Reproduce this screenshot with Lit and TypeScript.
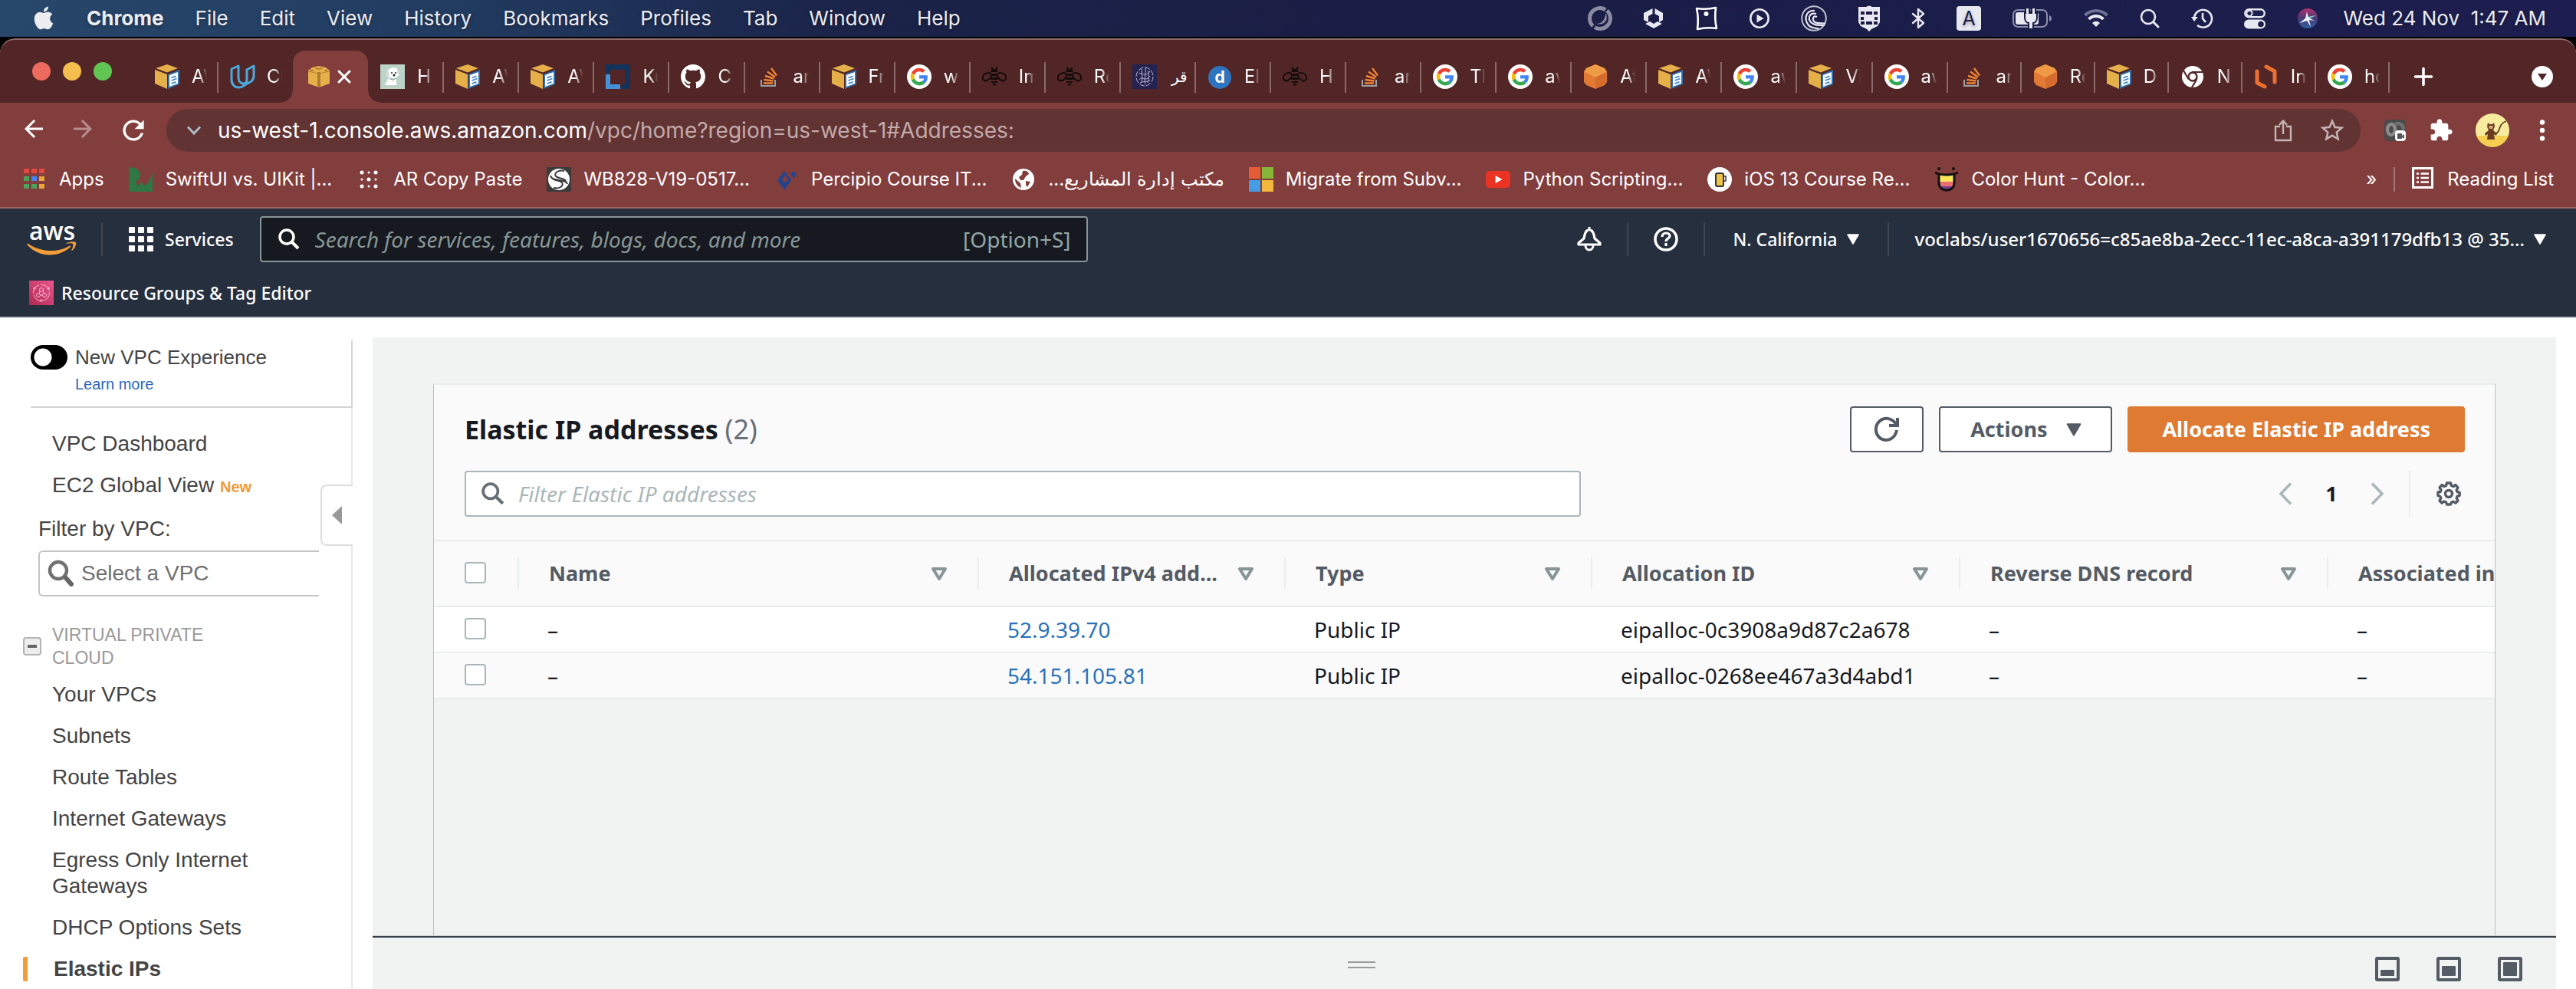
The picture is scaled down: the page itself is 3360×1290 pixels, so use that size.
import { LitElement, html, css, svg, type TemplateResult } from "lit";
import { customElement } from "lit/decorators.js";
import { classMap } from "lit/directives/class-map.js";

const art = (w: number, h: number, box: string, body: TemplateResult) =>
  html`<svg class="art" width=${w} height=${h} viewBox=${box} fill="none" aria-hidden="true">${body}</svg>`;

const googleG = svg`
  <circle cx="24" cy="24" r="24" fill="#fff"/>
  <g transform="translate(7 7) scale(.71)">
    <path fill="#EA4335" d="M24 9.5c3.54 0 6.71 1.22 9.21 3.6l6.85-6.85C35.9 2.38 30.47 0 24 0 14.62 0 6.51 5.38 2.56 13.22l7.98 6.19C12.43 13.72 17.74 9.5 24 9.5z"/>
    <path fill="#4285F4" d="M46.98 24.55c0-1.57-.15-3.09-.38-4.55H24v9.02h12.94c-.58 2.96-2.26 5.48-4.78 7.18l7.73 6c4.51-4.18 7.09-10.36 7.09-17.65z"/>
    <path fill="#FBBC05" d="M10.53 28.59c-.48-1.45-.76-2.99-.76-4.59s.27-3.14.76-4.59l-7.98-6.19C.92 16.46 0 20.12 0 24c0 3.88.92 7.54 2.56 10.78l7.97-6.19z"/>
    <path fill="#34A853" d="M24 48c6.48 0 11.93-2.13 15.89-5.81l-7.73-6c-2.15 1.45-4.92 2.3-8.16 2.3-6.26 0-11.57-4.22-13.47-9.91l-7.98 6.19C6.51 42.62 14.62 48 24 48z"/>
  </g>`;

const favicons: Record<string, TemplateResult> = {
  docs: art(32, 32, "0 0 32 32", svg`
    <path fill="#e5b04a" d="M16 0 30 5 16 10.500 1 5z"/>
    <path fill="#e5b04a" d="M0 7l16 6v19L0 25z"/>
    <path fill="#2f6fad" d="M17 13 32 7v19l-15 6z"/>
    <path fill="#fff" d="M19 14l11-4v15l-11 4z"/>
    <path stroke="#3d83c4" stroke-width="1.800" d="M21.500 17.500l6-2.200M21.500 21l7-2.500M21.500 25l6-2.200"/>`),
  udacity: art(32, 32, "0 0 32 32", svg`
    <path stroke="#4aa9dc" stroke-width="3" stroke-linejoin="round" d="M11 2 2 6v14c0 6 4 10 9 10 4 0 6-1 8-3l9-5c2-2 3-4 3-7V2l-9 5v11c0 4-1 7-4 7-5 0-7-4-7-8zM19 27c1-1 3-3 3-7"/>`),
  box: art(28, 28, "0 0 28 28", svg`
    <path fill="#e5b04a" d="M0 6l5-4 9-2 9 2 5 4v17l-14 5-14-5z"/>
    <path fill="#9c6a2b" d="M3 4l5 2-5 2zM25 4l-5 2 5 2zM9 2l5 1 5-1-1 2-4 1-4-1z" opacity=".7"/>
    <path fill="#b07a2e" d="M12 8h4v20h-4z"/><path stroke="#b98233" d="M0 7l14 3 14-3"/>`),
  dog: art(32, 32, "0 0 32 32", svg`
    <path fill="#bcd3c8" d="M0 0h32v32H0z"/>
    <path fill="#fff" d="M12 6c5-3 10-2 12 2 2 3 1 6-1 7l-2 3v9H9c-3 0-4-2-2-3l2-1c0-3 1-5 3-7-4 0-4-8 0-10z"/>
    <path fill="#d9d9d9" d="M10 7c-3 2-3 6-2 9 2 1 4-1 4-4zM22 6c3 1 4 4 3 7l-3-1z"/>
    <circle cx="15" cy="11" r="1" fill="#222"/><circle cx="20" cy="11" r="1" fill="#222"/><circle cx="18" cy="14" r="1.500" fill="#222"/>
    <path stroke="#6aa9d6" stroke-width="1.500" d="M12 18c3 2 6 2 9 0"/><circle cx="17" cy="20" r="1.400" fill="#e6b84c"/>`),
  kube: art(32, 32, "0 0 32 32", svg`
    <path fill="#14335c" d="M0 0h32v32H20v-6h5V7H6v5H0z"/><path fill="#4192d9" d="M0 13h6v13h13v6H0z"/>`),
  github: art(32, 32, "0 0 16 16", svg`
    <path fill="#fff" d="M8 0C3.580 0 0 3.580 0 8c0 3.540 2.290 6.530 5.470 7.590.4.070.55-.170.55-.380 0-.190-.010-.820-.010-1.490-2.010.370-2.530-.490-2.690-.940-.090-.230-.480-.940-.820-1.130-.280-.150-.680-.520-.010-.530.630-.010 1.080.580 1.230.820.720 1.210 1.870.870 2.330.660.070-.520.280-.870.510-1.070-1.780-.200-3.640-.890-3.640-3.950 0-.870.310-1.590.820-2.150-.080-.200-.360-1.020.080-2.120 0 0 .670-.210 2.200.820.640-.180 1.320-.270 2-.270s1.360.090 2 .270c1.530-1.040 2.200-.820 2.200-.820.440 1.100.160 1.920.080 2.120.510.560.820 1.270.820 2.150 0 3.070-1.870 3.750-3.650 3.950.290.250.540.730.540 1.480 0 1.070-.010 1.930-.010 2.200 0 .210.150.460.550.380A8.010 8.010 0 0 0 16 8c0-4.420-3.580-8-8-8z"/>`),
  stack: art(32, 32, "0 0 32 32", svg`
    <path stroke="#9aa0a6" stroke-width="2" d="M6 20v8h18v-8"/>
    <path stroke="#ee8336" stroke-width="2.400" d="M9 24.500h12M9.500 20l12 1.500M11 15l11.500 3.500M14 9.500l10 7M19 5l7 9.500"/>`),
  google: art(32, 32, "0 0 48 48", googleG),
  bee: art(32, 32, "0 0 32 32", svg`
    <path stroke="#160c0c" stroke-width="2" d="M12 12C5 9 0 14 1 19c3 5 9 1 11-4M20 12c7-3 12 2 11 7-3 5-9 1-11-4"/>
    <path fill="#160c0c" d="M13 6h6l2 4h-10zM11 12h10v3H11zM11 17h10v3H11zM12 22h8v2h-8zM13 25h6l-3 3z"/>
    <circle cx="13" cy="5" r="1.500" fill="#160c0c"/><circle cx="19" cy="5" r="1.500" fill="#160c0c"/>`),
  quran: art(32, 32, "0 0 32 32", svg`
    <path fill="#242250" d="M0 0h32v32H0z"/>
    <g stroke="#b9b4cf" stroke-width="1"><ellipse cx="16" cy="16" rx="11" ry="12" stroke-dasharray="7 2"/>
    <path d="M8 13c4-5 8 6 15-4M9 20c4-6 8 4 14-5M12 6c0 8 2 10 0 18M17 5c1 8-2 12 0 21M21 8c-1 6 2 9-1 16M10 24c6-3 10 0 13-4"/></g>`),
  dee: art(32, 32, "0 0 32 32", svg`
    <circle cx="16" cy="17" r="15" fill="#2f74bf"/><text x="16" y="24" text-anchor="middle" font-family="Inter, sans-serif" font-weight="700" font-size="21" fill="#fff">d</text>`),
  cube: art(32, 32, "0 0 32 32", svg`
    <path fill="#e27a34" d="M16 0 28 5l3 4v14l-3 4-12 5-12-5-3-4V9l3-4z"/>
    <path fill="#ef9b45" d="M16 0 28 5l2 5-6 3-8 4-8-4-6-3 2-5z"/><path fill="#c9602a" d="M16 17l14-7v14l-14 8z" opacity=".55"/>`),
  chrome: art(28, 28, "0 0 28 28", svg`
    <circle cx="14" cy="14" r="14" fill="#fff"/><circle cx="14" cy="14" r="5.500" stroke="#522626" stroke-width="2.400"/>
    <path stroke="#522626" stroke-width="2.200" d="M13 8h14M8.500 17 2 6M19.500 17l-6.500 11"/>`),
  linode: art(32, 32, "0 0 32 32", svg`
    <path stroke="#ea7132" stroke-width="5" stroke-linejoin="round" stroke-linecap="round" d="M4 9v15l10 5M16 3l11 6v14"/>`),
};

const bookmarkIcons: Record<string, TemplateResult> = {
  apps: art(28, 28, "0 0 28 28", svg`
    <path fill="#e2483d" d="M0 0h7v6H0zM10 0h7v6h-7zM20 0h7v6h-7z"/><path fill="#4ba35b" d="M0 10h7v6H0zM0 20h7v6H0zM10 20h7v6h-7z"/>
    <path fill="#4285f4" d="M10 10h7v6h-7z"/><path fill="#e9a33a" d="M20 10h7v6h-7zM20 20h7v6h-7z"/>`),
  swift: art(32, 32, "0 0 32 32", svg`
    <path fill="#2f7744" d="M0 0c9 0 15 4 15 10 0 4-2 7-6 9l3 6 4-6 5 5c5-4 8-10 10-18v26H0z"/>`),
  dots: art(32, 32, "0 0 32 32", svg`
    <g fill="#fff"><circle cx="7" cy="7" r="2.500"/><circle cx="16" cy="7" r="1.500"/><circle cx="25" cy="7" r="2.500"/><circle cx="7" cy="16" r="1.500"/><circle cx="16" cy="16" r="2.500"/><circle cx="25" cy="16" r="1.500"/><circle cx="7" cy="25" r="2.500"/><circle cx="16" cy="25" r="1.500"/><circle cx="25" cy="25" r="2.500"/></g>`),
  wb: art(32, 32, "0 0 32 32", svg`
    <rect width="32" height="32" rx="2" fill="#3a3a3a"/><circle cx="16" cy="16" r="14" fill="#fff"/>
    <path stroke="#3a3a3a" stroke-width="2" d="M23 5c-8-2-14 3-11 7 3 3 11 2 13 6M9 27c8 2 14-3 11-7-3-3-11-2-13-6M5 11c2 9 20 3 22 11"/>`),
  percipio: art(32, 32, "0 0 32 32", svg`
    <path fill="#22448f" fill-rule="evenodd" d="M13 5l9 12-9 13L4 17zM14 10l-4 6 4 5 4-5zM25 5l4 4-4 6-4-6z"/>`),
  globe: art(28, 28, "0 0 28 28", svg`
    <circle cx="14" cy="14" r="14" fill="#fff"/><path fill="#823d3d" d="M13 3c5-1 8 2 8 4l-4 3-3 5h-4l-2-4 4-3zM3 13l7 6 1 6C6 23 3 19 3 13zM17 16l6 1-4 7-2-3z"/>`),
  windows: art(32, 32, "0 0 32 32", svg`
    <path fill="#e35c33" d="M0 0h15v15H0z"/><path fill="#86b53a" d="M17 0h15v15H17z"/><path fill="#459ee4" d="M0 17h15v15H0z"/><path fill="#f4b73e" d="M17 17h15v15H17z"/>`),
  youtube: art(32, 32, "0 0 32 32", svg`
    <rect y="5" width="32" height="22" rx="5" fill="#ea3323"/><path fill="#fff" d="M12.500 11v10l9-5z"/>`),
  ios: art(32, 32, "0 0 32 32", svg`
    <circle cx="16" cy="16" r="16" fill="#fff"/><rect x="11" y="8" width="10" height="17" rx="2" fill="#f0c246" stroke="#333" stroke-width="2"/><path stroke="#333" stroke-width="1.500" d="M21 12h3v6h-3"/>`),
  hunt: art(32, 32, "0 0 32 32", svg`
    <path fill="#fbe65a" d="M6 9h20v10H6z"/><path fill="#ea6f73" d="M6 19h20l-2 6H8z"/><path fill="#7b3f8d" d="M8 25h16l-4 5h-8z"/>
    <path stroke="#111" stroke-width="3" d="M1 7c8 4 22 4 30 0M6 9v12c0 12 20 12 20 0V9"/><circle cx="6" cy="2" r="2" fill="#111"/><circle cx="25" cy="2" r="2" fill="#111"/>`),
};

const caret = (color: string, w = 16, h = 14) => art(w, h, "0 0 16 14", svg`<path fill=${color} stroke=${color} stroke-width="1.500" stroke-linejoin="round" d="M1 1h14L8 13z"/>`);
const glass = (size: number, color: string) =>
  art(size, size, "0 0 28 28", svg`<circle cx="11" cy="11" r="9" stroke=${color} stroke-width="3.500"/><path stroke=${color} stroke-width="4" d="M17.500 17.500 26 26"/>`);

const statusIcons: TemplateResult[] = [
  art(32, 32, "0 0 32 32", svg`<g opacity=".55"><circle cx="16" cy="16" r="13.500" stroke="#e8e8f0" stroke-width="5" stroke-dasharray="39.400 3" transform="rotate(-48 16 16)"/><path fill="#e8e8f0" d="M23 9c5 8-1 17-12 14 8 0 12-6 12-14z"/></g>`),
  art(26, 26, "0 0 26 26", svg`<g fill="#e8e8f0"><path d="M11.500 0v7L6 10v8l-6-3V6zM14.500 0v7L20 10v8l5-3V6zM2 20l6-3 5 3 5-3 6 3-11 6z"/></g>`),
  art(30, 32, "0 0 30 32", svg`<path stroke="#fff" stroke-width="2.600" stroke-linejoin="round" d="M2 3q12 2 25-1-2 14 1 27-12-2-25 1 2-14-1-27z"/><circle cx="14.500" cy="10" r="3" fill="#fff"/>`),
  art(26, 26, "0 0 26 26", svg`<circle cx="13" cy="13" r="11.700" stroke="#e8e8f0" stroke-width="2.600"/><path fill="#e8e8f0" d="M9.500 7.500v11l9-5.500z"/>`),
  art(34, 34, "0 0 34 34", svg`<g stroke="#e8e8f0"><circle cx="17" cy="17" r="15.800" stroke-width="2" opacity=".8"/><path stroke-width="2.200" d="M18 7C7 6 3 17 10 26c3 3 8 4 13 4M20 11C12 9 8 16 13 22c3 3 6 4 18 4M21 15c-5-2-7 3-3 7 2 1 6 1.500 14 1.500"/></g>`),
  art(28, 34, "0 0 28 34", svg`<path fill="#e8e8f0" d="M10 2q4-3 8 0h10v20l-3 5-8 4-3 3-3-3-8-4-3-5V2z"/><path fill="#1b1d4a" d="M3 8h5v4H3zM10 8h8v4h-8zM20 8h5v4h-5zM3 15h4v4H3zM21 15h4v4h-4zM3 21h5v4H3zM10 21h8v4h-8zM20 21h5v4h-5z"/>`),
  art(18, 28, "0 0 18 28", svg`<path stroke="#e8e8f0" stroke-width="2.400" stroke-linejoin="round" stroke-linecap="round" d="M2 8l14 12-7 6V2l7 6L2 20"/>`),
  art(32, 32, "0 0 32 32", svg`<rect width="32" height="32" rx="4" fill="#e8e8f0"/><text x="16" y="25" text-anchor="middle" font-family="Inter, sans-serif" font-size="25" fill="#1b1d4a">A</text>`),
  art(52, 28, "0 0 52 28", svg`<rect x="1" y="3" width="44" height="22" rx="6" stroke="#8d8eac" stroke-width="2"/><rect x="4" y="6" width="30" height="16" rx="3" fill="#e8e8f0"/><path fill="#8d8eac" d="M48 10c4 1 4 7 0 8z"/><path fill="#e8e8f0" stroke="#1b1d4a" stroke-width="2" d="M17 0h5v7h3V0h5v7h2v6c0 5-3 7-5 7v8h-6v-8c-2 0-5-2-5-7V7h1z"/>`),
  art(32, 26, "0 0 32 26", svg`<path stroke="#6e6f93" stroke-width="4" d="M1.500 9c8-8 21-8 29 0"/><path stroke="#e8e8f0" stroke-width="4" d="M6.500 14c5-5.500 14-5.500 19 0"/><path fill="#e8e8f0" d="M11 19c3-3 7-3 10 0l-5 5z"/>`),
  art(26, 26, "0 0 26 26", svg`<circle cx="11" cy="11" r="9" stroke="#e8e8f0" stroke-width="2.600"/><path stroke="#e8e8f0" stroke-width="3" stroke-linecap="round" d="M18 18l6 6"/>`),
  art(28, 28, "0 0 28 28", svg`<path stroke="#e8e8f0" stroke-width="2.600" d="M4 14a11.500 11.500 0 1 1 4 9M15 7v7l4 5"/><path fill="#e8e8f0" d="M0 12h9l-5 6z"/>`),
  art(28, 28, "0 0 28 28", svg`<rect x="1.300" y="2.300" width="25.400" height="10" rx="5" stroke="#e8e8f0" stroke-width="2.400"/><circle cx="7" cy="7.300" r="3.600" stroke="#e8e8f0" stroke-width="2"/><rect y="15.500" width="28" height="12" rx="6" fill="#e8e8f0"/><circle cx="22" cy="21.500" r="3.800" fill="#1b1d4a"/>`),
  art(28, 28, "0 0 28 28", svg`<defs><linearGradient id="orb" x1="0" y1="0" x2="0" y2="1"><stop offset="0" stop-color="#b0316d"/><stop offset=".5" stop-color="#4b3a78"/><stop offset="1" stop-color="#2b5fa3"/></linearGradient></defs><circle cx="14" cy="14" r="13" fill="url(#orb)"/><path fill="#7ed0d0" d="M3 20l11-8 11-2-10 5z"/><path fill="#fff" d="M13 5l2 8 8 4-7-1 2 9-5-8-9 3 7-6z" opacity=".9"/>`),
];

const tabs: Array<[string, string]> = [
  ["docs", "AW"], ["udacity", "Cl"], ["box", ""], ["dog", "Ho"], ["docs", "AW"], ["docs", "AW"], ["kube", "Ku"], ["github", "Cl"],
  ["stack", "an"], ["docs", "Fr"], ["google", "w"], ["bee", "Im"], ["bee", "Re"], ["quran", "قر"], ["dee", "El"], ["bee", "Hi"],
  ["stack", "an"], ["google", "Th"], ["google", "aw"], ["cube", "At"], ["docs", "AW"], ["google", "aw"], ["docs", "Vi"], ["google", "aw"],
  ["stack", "an"], ["cube", "Re"], ["docs", "D"], ["chrome", "N"], ["linode", "In"], ["google", "ho"],
];

const bookmarks: Array<[string, string]> = [
  ["apps", "Apps"], ["swift", "SwiftUI vs. UIKit |..."], ["dots", "AR Copy Paste"], ["wb", "WB828-V19-0517..."],
  ["percipio", "Percipio Course IT..."], ["globe", "مكتب إدارة المشاريع..."], ["windows", "Migrate from Subv..."],
  ["youtube", "Python Scripting..."], ["ios", "iOS 13 Course Re..."], ["hunt", "Color Hunt - Color..."],
];

@customElement("mac-menubar")
class MacMenubar extends LitElement {
  static styles = css`
    :host { display: flex; align-items: center; height: 48px; padding: 0 39px 0 42px;
      background: linear-gradient(100deg, #27476b 0%, #223c61 17%, #1b2349 33%, #1a1d45 55%, #1d1e4f 100%);
      color: #ececf1; font: 26px/32px Inter, sans-serif; box-sizing: border-box; white-space: pre; text-shadow: 0 2px 4px rgb(0 0 0 / .35); }
    button { all: unset; cursor: default; }
    .menus { display: flex; align-items: center; gap: 41px; }
    .strong { font-weight: 700; }
    .status { display: flex; align-items: center; gap: 41px; margin-left: auto; }
    .art { display: block; overflow: visible; }
    .clock { margin-left: -8px; }
  `;
  render() {
    return html`
      <nav class="menus">
        <button aria-label="System menu">${art(30, 32, "0 0 24 25", svg`<path fill="#ececf1" d="M12.152 6.896c-.948 0-2.415-1.078-3.960-1.040-2.040.027-3.910 1.183-4.961 3.014-2.117 3.675-.546 9.103 1.519 12.090 1.013 1.454 2.208 3.090 3.792 3.039 1.520-.065 2.090-.987 3.935-.987 1.831 0 2.350.987 3.960.948 1.637-.026 2.676-1.480 3.676-2.948 1.156-1.688 1.636-3.325 1.662-3.415-.039-.013-3.182-1.221-3.220-4.857-.026-3.040 2.480-4.494 2.597-4.559-1.429-2.090-3.623-2.324-4.390-2.376-2-.156-3.675 1.090-4.610 1.090zM15.530 3.830c.843-1.012 1.400-2.427 1.245-3.830-1.207.052-2.662.805-3.532 1.818-.780.896-1.454 2.338-1.273 3.714 1.338.104 2.715-.688 3.559-1.701"/>`)}</button>
        <button class="strong">Chrome</button>
        ${["File", "Edit", "View", "History", "Bookmarks", "Profiles", "Tab", "Window", "Help"].map((m) => html`<button>${m}</button>`)}
      </nav>
      <div class="status">${statusIcons}<time class="clock">Wed 24 Nov  1:47 AM</time></div>`;
  }
}

@customElement("browser-chrome")
class BrowserChrome extends LitElement {
  static styles = css`
    :host { display: block; background: #823d3d; color: #fff; font-family: Inter, "Noto Sans", sans-serif; border-bottom: 2px solid #a06565; }
    button { all: unset; display: flex; cursor: default; }
    a { color: inherit; text-decoration: none; }
    .art { display: block; flex: none; overflow: visible; }
    .strip { display: flex; align-items: flex-end; height: 82px; background: #522626; padding-right: 30px; }
    .lights { display: flex; gap: 16px; padding: 0 40px 29px 42px; }
    .light { width: 24px; height: 24px; border-radius: 50%; }
    .red { background: #ec6a5e; } .amber { background: #f4bf4f; } .green { background: #61c554; }
    .tabs { flex: 0 1 2930px; min-width: 0; display: grid; grid-template-columns: repeat(24, minmax(0, 98fr)) repeat(6, minmax(0, 96fr)); }
    .tab { position: relative; display: flex; align-items: center; gap: 16px; height: 68px; padding-left: 16px; font-size: 24px; line-height: 32px; box-sizing: border-box; }
    .tab:not(.active)::after { content: ""; position: absolute; right: -1px; top: 15px; width: 2px; height: 40px; background: #8a6868; }
    .tab.quiet::after { display: none; }
    .pic { width: 32px; display: flex; justify-content: center; }
    .name { width: 20px; overflow: hidden; white-space: nowrap; mask-image: linear-gradient(90deg, #000 50%, transparent); }
    .name:dir(rtl) { width: 24px; font-size: 20px; mask-image: none; }
    .active { background: #823d3d; border-radius: 16px 16px 0 0; gap: 10px; }
    .active .pic { justify-content: flex-end; }
    .active::before, .active::after { content: ""; position: absolute; bottom: 0; width: 16px; height: 16px; }
    .active::before { left: -16px; background: radial-gradient(circle at 0 0, #522626 15px, #823d3d 16px); }
    .active::after { right: -16px; background: radial-gradient(circle at 100% 0, #522626 15px, #823d3d 16px); }
    .add { padding: 0 0 22px 33px; }
    .more { margin-left: auto; padding-bottom: 20px; }
    .toolbar { display: flex; align-items: center; height: 72px; padding: 0 32px 0 29px; }
    .nav { display: flex; gap: 34px; }
    .pill { flex: 1; display: flex; align-items: center; height: 56px; margin: 0 30px 0 26px; padding: 0 20px 0 27px; border-radius: 28px; background: #623333; box-sizing: border-box; }
    .url { flex: 1; margin-left: 22px; font-size: 28px; line-height: 36px; color: #fff; outline: none; }
    .path { color: #c2aaaa; }
    .pill-tools { display: flex; align-items: center; gap: 35px; }
    .tools { display: flex; align-items: center; gap: 29px; }
    .tools button:last-child { width: 24px; justify-content: center; margin-left: 2px; }
    .bookmarks { display: flex; align-items: center; height: 56px; padding: 0 29px 8px 29px; font-size: 24px; line-height: 32px; white-space: nowrap; }
    .marks { display: flex; gap: 32px; flex: 1; min-width: 0; overflow: hidden; }
    .mark { display: flex; align-items: center; gap: 16px; }
    .rule { width: 2px; height: 32px; background: #a87676; margin: 0 22px; }
    .reading { gap: 18px; }
  `;
  render() {
    return html`
      <div class="strip">
        <div class="lights"><button class="light red" aria-label="Close window"></button><button class="light amber" aria-label="Minimise window"></button><button class="light green" aria-label="Zoom window"></button></div>
        <div class="tabs" role="tablist">
          ${tabs.map(([icon, name], i) => html`
            <div role="tab" aria-label=${name || "Elastic IP addresses"} class=${classMap({ tab: true, active: i === 2, quiet: i === 1 })}>
              <span class="pic">${favicons[icon]}</span>
              ${i === 2
                ? html`<button aria-label="Close tab">${art(18, 18, "0 0 18 18", svg`<path stroke="#fff" stroke-width="3" stroke-linecap="round" d="M2 2l14 14M16 2 2 16"/>`)}</button>`
                : html`<span class="name" dir="auto">${name}</span>`}
            </div>`)}
        </div>
        <button class="add" aria-label="New tab">${art(24, 24, "0 0 24 24", svg`<path stroke="#fff" stroke-width="3.600" stroke-linecap="round" d="M12 1.500v21M1.500 12h21"/>`)}</button>
        <button class="more" aria-label="Search tabs">${art(28, 28, "0 0 28 28", svg`<circle cx="14" cy="14" r="14" fill="#fff"/><path fill="#522626" d="M8 10h12l-6 9z"/>`)}</button>
      </div>
      <div class="toolbar">
        <div class="nav">
          <button aria-label="Back">${art(30, 30, "2 2 20 20", svg`<path fill="#fff" d="M20 11H7.830l5.590-5.590L12 4l-8 8 8 8 1.410-1.410L7.830 13H20v-2z"/>`)}</button>
          <button aria-label="Forward">${art(30, 30, "2 2 20 20", svg`<path fill="#b88d8d" d="M4 11h12.170l-5.590-5.590L12 4l8 8-8 8-1.410-1.410L16.170 13H4v-2z"/>`)}</button>
          <button aria-label="Reload">${art(34, 34, "2 2 20 20", svg`<path fill="#fff" d="M17.650 6.350C16.200 4.900 14.210 4 12 4c-4.420 0-7.990 3.580-7.990 8s3.570 8 7.990 8c3.730 0 6.840-2.550 7.730-6h-2.080c-.820 2.330-3.040 4-5.650 4-3.310 0-6-2.690-6-6s2.690-6 6-6c1.660 0 3.140.690 4.220 1.780L13 11h7V4l-2.350 2.350z"/>`)}</button>
        </div>
        <div class="pill">
          ${art(18, 12, "0 0 18 12", svg`<path stroke="#aebac3" stroke-width="3" d="M1 1.500l8 8.500 8-8.500"/>`)}
          <div class="url" role="textbox" aria-label="Address" contenteditable="true" spellcheck="false">us-west-1.console.aws.amazon.com<span class="path">/vpc/home?region=us-west-1#Addresses:</span></div>
          <div class="pill-tools">
            <button aria-label="Share">${art(24, 30, "0 0 24 30", svg`<path stroke="#c5b3b3" stroke-width="2.400" d="M8 10H2v18h20V10h-6M12 20V3M7 8l5-5.500L17 8"/>`)}</button>
            <button aria-label="Bookmark this page">${art(34, 34, "1 1 22 22", svg`<path fill="#c5b3b3" d="M22 9.240l-7.190-.620L12 2 9.190 8.630 2 9.240l5.460 4.730L5.820 21 12 17.270 18.180 21l-1.630-7.030L22 9.240zM12 15.400l-3.760 2.270 1-4.280-3.320-2.880 4.380-.380L12 6.100l1.710 4.040 4.380.380-3.320 2.880 1 4.280L12 15.400z"/>`)}</button>
          </div>
        </div>
        <div class="tools">
          <button aria-label="Meeting extension">${art(30, 30, "0 0 30 30", svg`<rect x="1" y="1" width="28" height="28" rx="5" fill="#4a4a4a"/><ellipse cx="10" cy="14" rx="5" ry="7" stroke="#8a8a8a" stroke-width="4.500"/><path stroke="#6f6f6f" stroke-width="4.500" d="M15 7c7-3 11 2 11 7"/><rect x="15" y="15" width="14" height="14" rx="4" fill="#fff"/><path fill="#555" d="M18 19h6v7h-6zM24 22l3-2v6l-3-2z"/>`)}</button>
          <button aria-label="Extensions">${art(32, 32, "0 0 24 24", svg`<path fill="#fff" d="M20.500 11H19V7c0-1.100-.900-2-2-2h-4V3.500C13 2.120 11.880 1 10.500 1S8 2.120 8 3.500V5H4c-1.100 0-1.990.900-1.990 2v3.800H3.500c1.490 0 2.700 1.210 2.700 2.700s-1.210 2.700-2.700 2.700H2V20c0 1.100.900 2 2 2h3.800v-1.500c0-1.490 1.210-2.700 2.700-2.700 1.490 0 2.700 1.210 2.700 2.700V22H17c1.100 0 2-.900 2-2v-4h1.500c1.380 0 2.500-1.120 2.500-2.500S21.880 11 20.500 11z"/>`)}</button>
          <button aria-label="Profile">${art(44, 44, "0 0 44 44", svg`<defs><clipPath id="disc"><circle cx="22" cy="22" r="22"/></clipPath></defs><g clip-path="url(#disc)"><path fill="#f7ec9e" d="M0 0h44v30H0z"/><path fill="#f5cf52" d="M0 29h44v15H0z"/><path fill="#6b3c20" d="M16 12l2 2h4l2-2 1 5-2 5 5 4-1 3-3-2 1 7H15l1-7-3 2-1-3 5-4-2-5z"/><path fill="#d9a679" d="M17 16h6l-1 4h-4z"/><path stroke="#6b3c20" stroke-width="1.800" d="M27 26c6-3 2-12 13-16"/></g>`)}</button>
          <button aria-label="Browser menu">${art(8, 28, "0 0 8 28", svg`<g fill="#fff"><circle cx="4" cy="3.500" r="3.200"/><circle cx="4" cy="14" r="3.200"/><circle cx="4" cy="24.500" r="3.200"/></g>`)}</button>
        </div>
      </div>
      <div class="bookmarks">
        <nav class="marks">${bookmarks.map(([icon, name]) => html`<a class="mark" href="#"><span class="pic">${bookmarkIcons[icon]}</span><span dir="auto">${name}</span></a>`)}</nav>
        <button aria-label="More bookmarks">»</button>
        <span class="rule"></span>
        <button class="reading">${art(28, 28, "0 0 28 28", svg`<rect x="1.500" y="1.500" width="25" height="25" stroke="#fff" stroke-width="3"/><path stroke="#fff" stroke-width="2.600" d="M6 8.500h3M6 14h3M6 19.500h3M11.500 8.500H22M11.500 14H22M11.500 19.500H22"/>`)}<span>Reading List</span></button>
      </div>`;
  }
}

@customElement("aws-header")
class AwsHeader extends LitElement {
  static styles = css`
    :host { display: block; background: #262f3e; color: #fff; border-bottom: 2px solid #50565f; font: 500 24px/32px "Noto Sans", sans-serif; white-space: nowrap; }
    button { all: unset; display: flex; align-items: center; cursor: default; }
    a { color: inherit; text-decoration: none; }
    .art { display: block; flex: none; overflow: visible; }
    .bar { display: flex; align-items: center; height: 80px; padding-right: 39px; }
    .logo { display: flex; flex-direction: column; align-items: center; width: 64px; margin-left: 36px; font: 600 32px/24px "Open Sans", sans-serif; padding-bottom: 2px; }
    .logo .art { margin-top: 5px; }
    .rule { width: 2px; height: 44px; background: #414750; }
    .logo + .rule { margin-left: 32px; margin-right: 34px; }
    .services { gap: 15px; font-size: 23px; }
    .search { display: flex; align-items: center; flex: 0 1 1080px; height: 60px; margin-left: 34px; padding: 0 20px 0 22px; border: 2px solid #879596; border-radius: 4px; background: #16191f; box-sizing: border-box; }
    input { all: unset; flex: 1; margin-left: 20px; font: italic 28px/36px "Noto Sans", sans-serif; color: #fff; }
    input::placeholder { color: #879596; }
    .hint { color: #95a5a6; font-weight: 400; font-size: 28px; }
    .right { display: flex; align-items: center; margin-left: auto; }
    .cell { padding: 0 33px; }
    .region { gap: 12px; padding: 0 37px 0 36px; font-size: 23px; }
    .account { gap: 12px; padding-left: 34px; }
    .favs { display: flex; align-items: center; height: 60px; padding-left: 38px; font-size: 23px; }
    .fav { display: flex; align-items: center; gap: 10px; }
  `;
  render() {
    return html`
      <div class="bar">
        <a class="logo" href="#" aria-label="AWS home">aws${art(64, 16, "0 0 64 16", svg`<path fill="#f29d38" d="M1 0c16 11 38 12 53 3 2-1 3 0 1 2C38 19 14 17 0 2c-1-2 0-3 1-2z"/><path fill="#f29d38" d="M63-2c1 3-2 9-5 11-1 0-1-1 0-2 1-3 2-6 1-7s-6-1-8 0c-1 0-1-1 0-1 4-2 11-2 12-1z"/>`)}</a>
        <span class="rule"></span>
        <button class="services">${art(32, 32, "0 0 32 32", svg`<g fill="#fff">${[0, 12, 24].map((y) => [0, 12, 24].map((x) => svg`<rect x=${x} y=${y} width="8" height="8" rx="1"/>`))}</g>`)}<span>Services</span></button>
        <label class="search">${glass(28, "#fff")}<input type="search" aria-label="Search" placeholder="Search for services, features, blogs, docs, and more"><span class="hint">[Option+S]</span></label>
        <div class="right">
          <button class="cell" aria-label="Notifications">${art(32, 32, "0 0 32 32", svg`<path stroke="#fff" stroke-width="3.200" stroke-linejoin="round" d="M16 3c-5 2-6 6-7 12l-7 6v2h28v-2l-7-6c-1-6-2-10-7-12zM16 0v4"/><path stroke="#fff" stroke-width="3" d="M11 24c0 8 10 8 10 0"/>`)}</button>
          <span class="rule"></span>
          <button class="cell" aria-label="Help">${art(32, 32, "0 0 32 32", svg`<circle cx="16" cy="16" r="14" stroke="#fff" stroke-width="3.500"/><path stroke="#fff" stroke-width="3.200" d="M11 13c0-7 10-6 10-1 0 3-5 3-5 7M16 21v4"/>`)}</button>
          <span class="rule"></span>
          <button class="region">N. California ${caret("#fff")}</button>
          <span class="rule"></span>
          <button class="account">voclabs/user1670656=c85ae8ba-2ecc-11ec-a8ca-a391179dfb13 @ 35... ${caret("#fff")}</button>
        </div>
      </div>
      <div class="favs"><a class="fav" href="#">${art(32, 32, "0 0 32 32", svg`<defs><linearGradient id="pink" x1="0" y1="1" x2="1" y2="0"><stop stop-color="#b0284f"/><stop offset="1" stop-color="#e8588f"/></linearGradient></defs><path fill="url(#pink)" d="M0 0h32v32H0z"/><g stroke="#ffb5cf"><circle cx="16" cy="16" r="10.500" stroke-dasharray="14 2"/><circle cx="16" cy="12" r="2.500"/><circle cx="12" cy="19" r="2.500"/><circle cx="20" cy="19" r="2.500"/><path d="M14 14l-1 3M18 14l1 3M15 19h2"/></g><g fill="#ffb5cf"><circle cx="7" cy="10" r="1.600"/><circle cx="25" cy="10" r="1.600"/><circle cx="16" cy="26" r="1.600"/></g>`)}Resource Groups &amp; Tag Editor</a></div>`;
  }
}

@customElement("vpc-sidebar")
class VpcSidebar extends LitElement {
  static styles = css`
    :host { position: relative; display: block; flex: none; width: 460px; margin-top: 30px; box-sizing: border-box; border-right: 2px solid #eaeaea; font: 28px/34px "Liberation Sans", sans-serif; color: #444; }
    a { color: inherit; text-decoration: none; }
    .intro { height: 88px; margin: 0 -2px 0 40px; padding-top: 6px; box-sizing: border-box; border-bottom: 2px solid #d5d5d5; border-right: 2px solid #d5d5d5; }
    .toggle { display: flex; align-items: center; gap: 10px; height: 32px; font-size: 26px; }
    .toggle input { appearance: none; margin: 0; width: 48px; height: 32px; border-radius: 16px; background: radial-gradient(circle at 16px 16px, #fff 11px, #000 12px); }
    .learn { display: block; margin: 7px 0 0 58px; font-size: 20px; line-height: 24px; color: #2a66bd; }
    .top { padding-top: 20px; }
    .item { display: block; padding: 10px 40px 10px 68px; }
    .new { font-size: 20px; font-weight: 700; color: #f19b38; }
    .filter { display: block; margin: 11px 0 0 50px; }
    .vpc { display: flex; align-items: center; gap: 8px; height: 60px; margin: 11px 42px 35px 50px; padding-left: 10px; box-sizing: border-box; border: 2px solid #c4c4c4; border-right: 0; border-radius: 6px 0 0 6px; background: #fff; }
    .vpc input { all: unset; min-width: 0; flex: 1; }
    .vpc input::placeholder { color: #707070; }
    .art { display: block; flex: none; }
    .group { display: flex; align-items: center; gap: 14px; padding-left: 30px; margin-bottom: 6px; font-size: 23px; line-height: 30px; color: #999; }
    .group button { all: unset; display: flex; }
    .group span { width: 230px; }
    .current { display: flex; align-items: center; font-weight: 700; padding-left: 30px; gap: 34px; }
    .current::before { content: ""; width: 6px; height: 32px; border-radius: 2px 0 0 2px; background: #f19b38; }
    .fold { all: unset; position: absolute; right: -2px; top: 188px; width: 42px; height: 80px; box-sizing: border-box; display: flex; align-items: center; justify-content: center; border: 2px solid #dedede; border-right: 0; border-radius: 8px 0 0 8px; background: #fff; }
  `;
  render() {
    return html`
      <div class="intro">
        <label class="toggle"><input type="checkbox" role="switch">New VPC Experience</label>
        <a class="learn" href="#">Learn more</a>
      </div>
      <nav class="top">
        <a class="item" href="#">VPC Dashboard</a>
        <a class="item" href="#">EC2 Global View <span class="new">New</span></a>
      </nav>
      <label class="filter" for="vpc">Filter by VPC:</label>
      <div class="vpc">${art(36, 36, "0 0 36 36", svg`<circle cx="14" cy="14" r="11" stroke="#707070" stroke-width="4.500"/><path stroke="#666" stroke-width="6" stroke-linecap="round" d="M24 24l7 8"/>`)}<input id="vpc" placeholder="Select a VPC"></div>
      <div class="group"><button aria-label="Collapse group">${art(24, 24, "0 0 24 24", svg`<rect x="1" y="1" width="22" height="22" rx="3" fill="#ededed" stroke="#b4b4b4" stroke-width="2"/><path fill="#666" d="M6 10h12v4H6z"/>`)}</button><span>VIRTUAL PRIVATE CLOUD</span></div>
      <nav>
        ${["Your VPCs", "Subnets", "Route Tables", "Internet Gateways", "Egress Only Internet Gateways", "DHCP Options Sets"].map((n) => html`<a class="item" href="#">${n}</a>`)}
        <a class="item current" href="#" aria-current="page">Elastic IPs</a>
      </nav>
      <button class="fold" aria-label="Hide navigation">${art(14, 24, "0 0 14 24", svg`<path fill="#999" d="M13 0v24L0 12z"/>`)}</button>`;
  }
}

const columns: Array<[string, string]> = [
  ["Name", "c600"], ["Allocated IPv4 add...", "c400"], ["Type", "c400"], ["Allocation ID", "c480"], ["Reverse DNS record", "c480"], ["Associated instance ID", "c480"],
];
const rows = [
  ["–", "52.9.39.70", "Public IP", "eipalloc-0c3908a9d87c2a678", "–", "–"],
  ["–", "54.151.105.81", "Public IP", "eipalloc-0268ee467a3d4abd1", "–", "–"],
];

@customElement("eip-panel")
class EipPanel extends LitElement {
  static styles = css`
    :host { flex: 1; min-width: 0; display: flex; flex-direction: column; margin: 26px 26px 0; background: #f1f3f3; font: 28px/36px "Noto Sans", sans-serif; color: #16191f; }
    .art { display: block; flex: none; overflow: visible; }
    .canvas { flex: 1; display: flex; padding: 60px 79px 0 79px; }
    .card { flex: 1; min-width: 0; box-sizing: border-box; overflow: hidden; border: 1px solid #babfbf; border-top: 2px solid #eaeded; border-bottom: 0; }
    .head { padding: 28px 39px 30px 40px; background: #fafafa; border-bottom: 2px solid #eaeded; }
    .row { display: flex; align-items: center; height: 60px; }
    .row + .row { margin-top: 24px; }
    h1 { margin: 0; flex: 1; font-size: 34px; line-height: 44px; font-weight: 700; }
    .count { font-weight: 400; font-size: 36px; color: #687078; }
    .actions { display: flex; gap: 20px; }
    button { all: unset; box-sizing: border-box; cursor: default; }
    .btn { display: flex; align-items: center; justify-content: center; height: 60px; border: 2px solid #545b64; border-radius: 4px; background: #fff; color: #545b64; font-size: 27px; font-weight: 700; }
    .refresh { width: 96px; }
    .menu { width: 226px; gap: 24px; }
    .primary { padding: 0 43px; background: #df7a32; border-color: #df7a32; color: #fff; }
    .search { flex: 0 1 1456px; display: flex; align-items: center; gap: 18px; height: 60px; padding-left: 20px; box-sizing: border-box; border: 2px solid #aab7b8; border-radius: 4px; background: #fff; }
    .search input { all: unset; flex: 1; font-style: italic; }
    .search input::placeholder { color: #aab7b8; }
    .pager { display: flex; align-items: center; margin-left: auto; padding-right: 5px; font-weight: 700; }
    .page { width: 102px; text-align: center; font-size: 27px; }
    .rule { width: 2px; height: 60px; margin: 0 34px 0 32px; background: #eaeded; }
    table { table-layout: fixed; width: 2949px; border-collapse: separate; border-spacing: 0; background: #fff; }
    th, td { padding: 0; text-align: left; border-bottom: 2px solid #eaeded; box-sizing: border-box; }
    th { height: 86px; background: #fafafa; color: #545b64; font-size: 27px; }
    td { height: 60px; padding-left: 39px; }
    tr:nth-child(even) td { background: #fafafa; }
    .pick { width: 109px; padding-left: 40px; }
    .c600 { width: 600px; } .c400 { width: 400px; } .c480 { width: 480px; }
    .label { display: flex; align-items: center; justify-content: space-between; height: 42px; padding: 0 40px 0 39px; border-left: 2px solid #eaeded; white-space: nowrap; }
    .pick input { appearance: none; display: block; width: 28px; height: 28px; margin: 0 0 2px; border: 2px solid #aab7b8; border-radius: 4px; background: #fff; }
    td a { color: #2a72b9; text-decoration: none; }
    .split { position: relative; flex: none; display: flex; align-items: center; height: 70px; box-sizing: border-box; border-top: 2px solid #3a444f; box-shadow: 0 -1px 0 #c8cccc; padding: 14px 44px 0 20px; }
    .grip { flex: 1; display: flex; justify-content: center; padding: 0 52px 10px 0; }
    .views { display: flex; gap: 48px; }
  `;
  render() {
    return html`
      <section class="canvas">
        <div class="card">
          <header class="head">
            <div class="row">
              <h1>Elastic IP addresses <span class="count">(2)</span></h1>
              <div class="actions">
                <button class="btn refresh" aria-label="Refresh">${art(32, 32, "0 0 32 32", svg`<path stroke="#545b64" stroke-width="4" d="M30 1v10H19M29 11C25 2 14-1 7 5-1 12 1 23 8 28c9 5 19 0 21-11"/>`)}</button>
                <button class="btn menu">Actions ${caret("#545b64", 20, 17)}</button>
                <button class="btn primary">Allocate Elastic IP address</button>
              </div>
            </div>
            <div class="row">
              <label class="search">${glass(30, "#687078")}<input type="search" aria-label="Filter" placeholder="Filter Elastic IP addresses"></label>
              <div class="pager">
                <button aria-label="Previous page">${art(18, 30, "0 0 18 30", svg`<path stroke="#aab7b8" stroke-width="3.500" d="M16 1.500 3 15l13 13.500"/>`)}</button>
                <span class="page">1</span>
                <button aria-label="Next page">${art(18, 30, "0 0 18 30", svg`<path stroke="#aab7b8" stroke-width="3.500" d="M2 1.500 15 15 2 28.500"/>`)}</button>
                <span class="rule"></span>
                <button aria-label="Preferences">${art(32, 32, "0 0 32 32", svg`<path stroke="#545b64" stroke-width="3.400" stroke-linejoin="round" d="M13.500 2h5l1 3.500 2.500 1L25 4.500 28 8l-1.800 3 1 2.500 3 .800v4l-3 1-1 2.500L28 25l-3 3-3.200-1.800-2.300 1-1 2.800h-5l-1-3-2.500-1L7 28l-3-3 1.800-3.200-1-2.300L2 18.500v-4.500l3-.500 1-2.500L4 8l3-3.500 3 2 2.500-1z"/><circle cx="16" cy="16" r="4.500" stroke="#545b64" stroke-width="3.400"/>`)}</button>
              </div>
            </div>
          </header>
          <table>
            <thead><tr>
              <th class="pick"><input type="checkbox" aria-label="Select all"></th>
              ${columns.map(([name, width]) => html`<th class=${width}><div class="label"><span>${name}</span>${art(20, 17, "0 0 20 17", svg`<path stroke="#879596" stroke-width="4" stroke-linejoin="round" d="M2 2h16l-8 13z"/>`)}</div></th>`)}
            </tr></thead>
            <tbody>
              ${rows.map((r) => html`<tr><td class="pick"><input type="checkbox" aria-label=${"Select " + r[1]}></td>${r.map((v, i) => html`<td>${i === 1 ? html`<a href="#">${v}</a>` : v}</td>`)}</tr>`)}
            </tbody>
          </table>
        </div>
      </section>
      <footer class="split">
        <div class="grip">${art(36, 10, "0 0 36 10", svg`<path fill="#999" d="M0 0h36v2H0zM0 7h36v2H0z"/>`)}</div>
        <div class="views">
          ${[[17, 8], [12, 13], [7, 18]].map(([y, h]) => html`<button aria-label="Panel size">${art(32, 32, "0 0 32 32", svg`<rect x="2" y="2" width="28" height="28" rx="1" stroke="#545b64" stroke-width="4"/><rect x="7" y=${y} width="18" height=${h} rx="1" fill="#545b64"/>`)}</button>`)}
        </div>
      </footer>`;
  }
}

@customElement("app-root")
class AppRoot extends LitElement {
  static styles = css`
    :host { display: flex; flex-direction: column; min-height: 100vh; background: #000; }
    .window { flex: 1; display: flex; flex-direction: column; margin-top: 2px; border-top: 2px solid #8d6c6c; border-radius: 20px 20px 0 0; overflow: hidden; background: #fff; }
    .console { flex: 1; display: flex; }
  `;
  render() {
    return html`
      <mac-menubar></mac-menubar>
      <div class="window">
        <browser-chrome></browser-chrome>
        <aws-header></aws-header>
        <main class="console"><vpc-sidebar></vpc-sidebar><eip-panel></eip-panel></main>
      </div>`;
  }
}
